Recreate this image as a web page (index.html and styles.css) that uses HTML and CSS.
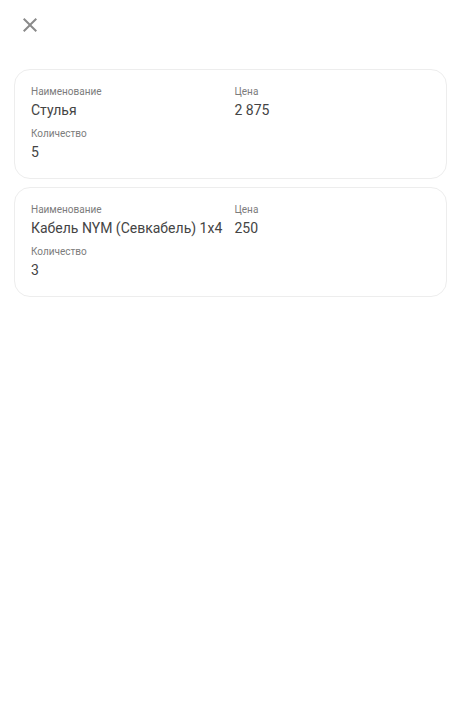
FILE: index.html
```html
<!DOCTYPE html>
<html lang="ru">
<head>
    <meta charset="UTF-8">
    <meta name="viewport" content="width=device-width, initial-scale=1.0">
    <title>Товары</title>
    <link rel="stylesheet" href="styles.css">
</head>
<body>

<div class="header">
    <button class="close-btn" type="button" aria-label="Закрыть">
        <svg width="24" height="24" viewBox="0 0 24 24">
            <path d="M19 6.41 17.59 5 12 10.59 6.41 5 5 6.41 10.59 12 5 17.59 6.41 19 12 13.41 17.59 19 19 17.59 13.41 12z" fill="currentColor"/>
        </svg>
    </button>
</div>

<div class="list">
    <div class="card">
        <div class="field">
            <div class="label">Наименование</div>
            <div class="value">Стулья</div>
        </div>
        <div class="field">
            <div class="label">Цена</div>
            <div class="value">2 875</div>
        </div>
        <div class="field">
            <div class="label">Количество</div>
            <div class="value">5</div>
        </div>
    </div>

    <div class="card">
        <div class="field">
            <div class="label">Наименование</div>
            <div class="value">Кабель NYM (Севкабель) 1x4</div>
        </div>
        <div class="field">
            <div class="label">Цена</div>
            <div class="value">250</div>
        </div>
        <div class="field">
            <div class="label">Количество</div>
            <div class="value">3</div>
        </div>
    </div>
</div>

</body>
</html>
```

FILE: styles.css
```css
body {
    font-family: Roboto, "Noto Sans", Arial, sans-serif;
    margin: 0;
    background-color: #fff;
    color: #333;
}
.header {
    padding: 13px 18px 0;
    height: 24px;
}
.close-btn {
    display: block;
    width: 24px;
    height: 24px;
    padding: 0;
    border: none;
    background: none;
    color: #8a8a8a;
    cursor: pointer;
}
.close-btn svg {
    display: block;
}
.list {
    display: flex;
    flex-direction: column;
    gap: 8px;
    margin: 32px 14px 0;
}
.card {
    display: grid;
    grid-template-columns: 1fr 1fr;
    column-gap: 8px;
    row-gap: 8px;
    padding: 16px 16px 16px;
    border: 1px solid #ededed;
    border-radius: 16px;
}
.label {
    font-size: 10px;
    line-height: 12px;
    color: #7c7c7c;
    margin-bottom: 2px;
}
.value {
    font-size: 14px;
    line-height: 20px;
    color: #444;
    white-space: nowrap;
}
```
